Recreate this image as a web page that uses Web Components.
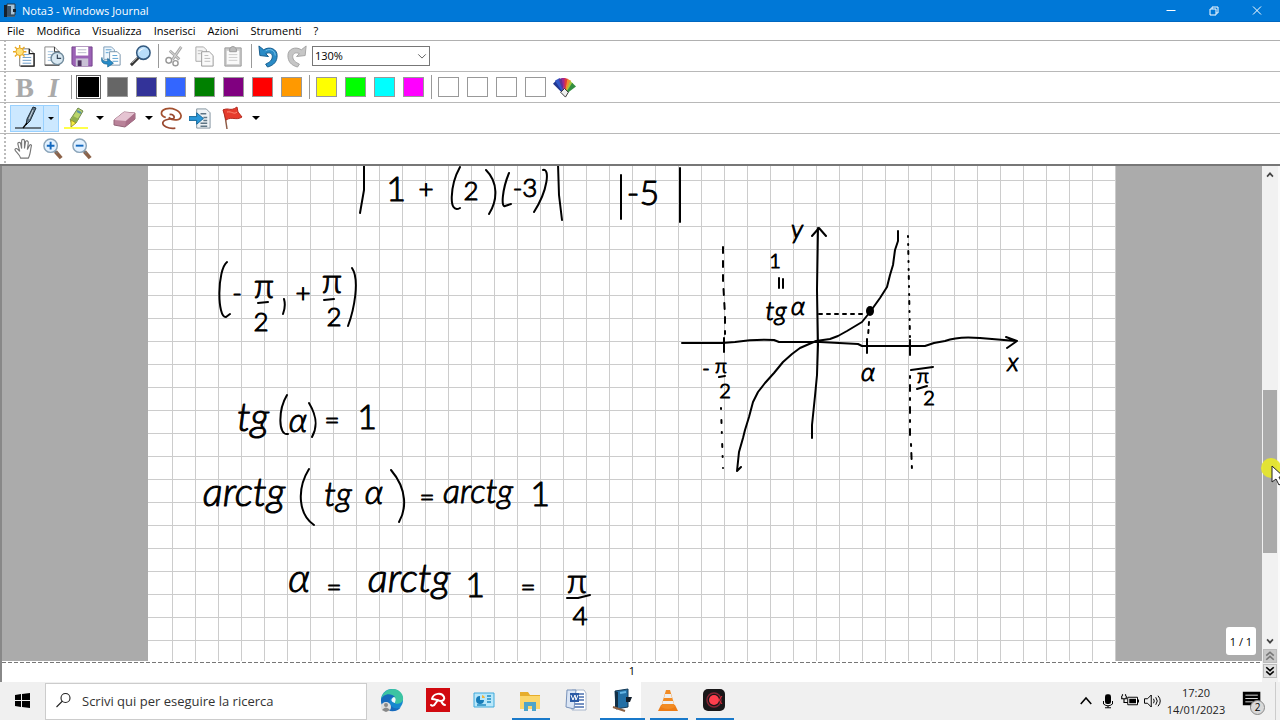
<!DOCTYPE html>
<html lang="it">
<head>
<meta charset="utf-8">
<title>Nota3 - Windows Journal</title>
<style>
  html, body { height: 100%; margin: 0; }
  body { font-family: "Open Sans", "Noto Sans", sans-serif; font-size: 11px; color: #000; background: #fff; overflow: hidden; }
</style>
</head>
<body>
<journal-app></journal-app>

<script>
const ICONS = {
  journal: `<path d="M4 2h9v12H4z" fill="#4b6478"/><path d="M5 1h8v11H5z" fill="#a8c4d8" stroke="#24384a"/><path d="M2 2h3v12H2z" fill="#16212e"/><path d="M5 3h4v9l-4 1z" fill="#3b5268"/><path d="M11 6h3v3h-3z" fill="#18222c"/>`,
  newnote: `<path d="M7 4h10l5 5v13H7z" fill="#fff" stroke="#777"/><path d="M17 4v5h5v13H8" fill="none" stroke="#222" stroke-width="1.4"/><path d="M11 10h6M10 13h9M10 16h9M10 19h9" stroke="#6a9bc8"/><circle cx="7" cy="7" r="4" fill="#ffe27a" stroke="#e5a11a"/><path d="M7 0v3M7 11v3M0 7h3M11 7h3M2 2l2 2M10 10l2 2M12 2l-2 2M2 12l2-2" stroke="#e8a820" stroke-width="1.4"/>`,
  recent: `<path d="M3 2h10l5 5v14H3z" fill="#fff" stroke="#888"/><path d="M13 2v5h5v14H3" fill="none" stroke="#333"/><path d="M6 7h6M6 10h6M6 13h6M6 16h6" stroke="#9fc0dc"/><circle cx="16" cy="14" r="6.500" fill="#d8e8f2" stroke="#718b9c" stroke-width="1.500"/><path d="M16 10v4h4" fill="none" stroke="#345" stroke-width="1.200"/>`,
  save: `<path d="M1 2h21v20H3l-2-2z" fill="#9b62b5" stroke="#73418b"/><path d="M5 2h13v9H5z" fill="#fff"/><path d="M7 5h9M7 8h9" stroke="#b7b7c8"/><path d="M5 14h13v8H5z" fill="#c9c2d6"/><path d="M7 16h4v6H7z" fill="#4e3560"/>`,
  importdoc: `<path d="M4 2h8l3 3v10H4z" fill="#eef6fc" stroke="#7b9db9"/><path d="M10 7h8l3 3v11H10z" fill="#fff" stroke="#7893aa"/><path d="M6 5h6M6 8h3M13 11h5M13 14h6M13 17h6" stroke="#59a0d2"/><path d="M2 13c0 3 2 4 6 4v-3l6 5-6 4v-3c-6 0-7-3-6-7z" fill="#278bc8" stroke="#14608f" stroke-width=".7"/>`,
  find: `<path d="M10 13l-8 8" stroke="#333" stroke-width="3"/><path d="M9 13l-6 6" stroke="#aaa"/><circle cx="15" cy="8" r="7" fill="#b9defa" stroke="#33597f" stroke-width="1.600"/><path d="M10 8c0-3 4-5 7-4-3 0-5 2-7 4z" fill="#fff"/>`,
  cut: `<path d="M18 2L9 15M6 6l10 9" stroke="#aaa" stroke-width="3"/><path d="M18 2L9 15M6 6l10 9" stroke="#ddd"/><circle cx="5" cy="16" r="3" fill="none" stroke="#999" stroke-width="1.500"/><circle cx="12" cy="19" r="2.700" fill="none" stroke="#999" stroke-width="1.500"/>`,
  copy: `<path d="M3 2h8l3 3v12H3z" fill="#f4f4f4" stroke="#aaa"/><path d="M9 7h8l4 4v11H9z" fill="#fafafa" stroke="#999"/><path d="M5 6h5M5 9h3M12 11h4M12 14h6M12 17h6" stroke="#bbb"/>`,
  paste: `<path d="M3 3h17v19H3z" fill="#ccc" stroke="#999"/><path d="M5 6h13v14H5z" fill="#fafafa"/><path d="M8 4q3-5 7 0v3H8z" fill="#bbb" stroke="#999"/><path d="M7 10h9M7 13h9M7 16h9" stroke="#ccc"/>`,
  undo: `<path d="M2 1l1 10 9 1-3-3c4-2 7 0 7 3 0 4-3 6-7 8l2 3c7-2 10-6 10-12 0-7-8-10-14-6z" fill="#2a8bc6" stroke="#155b8c"/><path d="M9 6c5-3 10 0 10 5" stroke="#7cc4ea"/>`,
  redo: `<path d="M21 1l-1 10-9 1 3-3c-4-2-7 0-7 3 0 4 3 6 7 8l-2 3C5 21 2 17 2 11c0-7 8-10 14-6z" fill="#c6c6c6" stroke="#a4a4a4"/>`,
  pen: `<path d="M0 22h26" stroke="#000"/><path d="M18 1l3 1-6 13-4 4 1-6z" fill="#5c7284" stroke="#1f2c36"/><path d="M18 4l-4 9" stroke="#ced8de"/><path d="M12 17l-4 5" fill="none" stroke="#000" stroke-width="1.300"/>`,
  marker: `<path d="M0 22h24" stroke="#ffff4a" stroke-width="2"/><path d="M14 2l5 3-7 12-6-3z" fill="#b9d56b" stroke="#6f8751"/><path d="M9 10l6 3-4 5-5-2z" fill="#8fae4e"/><path d="M7 14l5 3-5 4z" fill="#f4ed3f" stroke="#9d982b"/><path d="M13 5l4 2" stroke="#5a93a5" stroke-width="2"/>`,
  eraser: `<path d="M1 14L11 6l11 1v6l-10 8-11-2z" fill="#b98299" stroke="#946478"/><path d="M1 14L11 6l11 1-9 8z" fill="#e5c4d2"/><path d="M13 15l9-8v6l-10 8z" fill="#a96f89"/>`,
  lasso: `<path d="M6 11C0 9 0 4 6 2c7-2 15 2 16 7 0 5-8 6-13 2" fill="none" stroke="#a3502f" stroke-width="1.800"/><path d="M10 8c4-1 6 3 4 4-4 1-9 0-11 4-1 4 6 7 13 6" fill="none" stroke="#9a4930" stroke-width="1.800"/>`,
  insert: `<path d="M8 2h10l4 4v16H8z" fill="#eef2f5" stroke="#8494a0"/><path d="M12 7h6M12 17h7M12 20h7M15 11h4M15 14h4" stroke="#5e7585" stroke-width="1.500"/><path d="M0 10h8V6l7 6-7 6v-4H0z" fill="#2b98da" stroke="#166799"/>`,
  flag: `<path d="M4 3l3 20" stroke="#8e5b45" stroke-width="1.500"/><path d="M3 4c6-3 7 2 14-3l1 5 4 5c-6 4-10-1-16 3z" fill="#e63b2c" stroke="#b42b20"/><path d="M7 6c5-1 7 3 10 0" fill="none" stroke="#ff8b76"/>`,
  hand: `<path d="M8 21c-1-4-6-7-6-9 1-2 3-1 5 2L5 6c0-2 3-2 3 0l1 5V3c0-2 3-2 3 0v8l1-7c1-2 3-1 3 1l-1 7 2-4c1-2 3-1 2 1-1 5-1 9-3 12z" fill="#fff" stroke="#777" stroke-width="1.200"/>`,
  zoomin: `<path d="M14 14l6 7" stroke="#8c6248" stroke-width="4"/><path d="M13 13l3 3" stroke="#777" stroke-width="2"/><circle cx="9" cy="8" r="7" fill="#e2f1ff" stroke="#8ba5ba" stroke-width="1.500"/><path d="M5 8h8M9 4v8" stroke="#1268bf" stroke-width="2"/>`,
  zoomout: `<path d="M14 14l6 7" stroke="#8c6248" stroke-width="4"/><path d="M13 13l3 3" stroke="#777" stroke-width="2"/><circle cx="9" cy="8" r="7" fill="#e2f1ff" stroke="#8ba5ba" stroke-width="1.500"/><path d="M5 8h8" stroke="#1268bf" stroke-width="2"/>`,
  palette: `<path d="M12 20L0 8 4 4z" fill="#22378f"/><path d="M12 20L2 5l5-3z" fill="#3157c6"/><path d="M12 20L6 3l4-1z" fill="#5f3096"/><path d="M12 20L9 2h4z" fill="#a02890"/><path d="M12 20V2l4 1z" fill="#e03a3a"/><path d="M12 20l3-17 4 2z" fill="#ef9131"/><path d="M12 20l6-15 3 3z" fill="#a5c83b"/><path d="M12 20l8-13 4 4z" fill="#338f40"/><path d="M8 17l4-4 4 4-3 5z" fill="#eee" stroke="#333"/>`,
  start: `<path d="M4 6l6-1v6H4zM11 5l8-1v7h-8zM4 12h6v6l-6-1zM11 12h8v7l-8-1z" fill="#000"/>`,
  search: `<circle cx="14" cy="8" r="6" fill="none" stroke="#222" stroke-width="1.500"/><path d="M10 12l-8 8" stroke="#222" stroke-width="1.500"/>`,
  edge: `<circle cx="12" cy="12" r="11" fill="#1688cf"/><path d="M1 12C2 4 8 1 13 1c7 0 11 6 10 11-1 4-8 5-9 2 2-3-1-6-5-6-4 0-7 1-8 4z" fill="#3cc4a2"/><path d="M1 12c1-6 10-8 14-3-6-1-8 8-1 11 3 1 6 0 7-1-4 6-13 5-17 1-2-2-3-5-3-8z" fill="#166abd"/><path d="M14 9c3 2 1 4 1 6-4-1-5-4-1-6z" fill="#eff9fc"/><circle cx="6" cy="19" r="5" fill="#ddd"/><circle cx="6" cy="17" r="2" fill="#888"/><path d="M2 22q4-5 8 0l-4 2z" fill="#888"/>`,
  umbrella: `<path d="M0 0h24v24H0z" fill="#d10a10"/><path d="M6 11c1-6 10-7 12-2 1 2-1 4-3 4-3 0-5-2-9-2M12 12l-3 4c-1 2-3 2-4 1M15 13c1 2 2 4 4 4" fill="none" stroke="#fff" stroke-width="2" stroke-linecap="round"/>`,
  panel: `<path d="M2 5h20v14H2z" fill="#b8e7fa" stroke="#3fa9db"/><path d="M8 8v4h4a4 4 0 1 1-4-4z" fill="#167cb9"/><path d="M10 7a4 4 0 0 1 3 3h-3z" fill="#f2b23e"/><path d="M15 8h4M15 11h4M15 14h4M5 17h9" stroke="#218ac0" stroke-width="1.500"/>`,
  folder: `<path d="M2 4h8l2 3h10v14H2z" fill="#e6ad2c"/><path d="M2 8h20v13H2z" fill="#fbd66b"/><path d="M6 14h12v9h-4v-5h-4v5H6z" fill="#4ea4c9"/>`,
  word: `<path d="M8 2h12l2 3v17H8z" fill="#fff" stroke="#a8b6cb"/><path d="M14 6h6M14 9h6M14 12h6M8 16h12M8 19h12" stroke="#496fae" stroke-width="1.500"/><path d="M3 2h9l-2 19-8-2z" fill="#dae5f5" stroke="#7791b9"/><path d="M6 5h9v9H6z" fill="#2b5aa5"/><path d="M7 7l2 5 2-5 1 5 2-5" stroke="#fff" fill="none"/>`,
  book: `<path d="M5 3l13-2v18l-12 2z" fill="#236fa5" stroke="#153b58"/><path d="M5 3l3 1v17l-3-2z" fill="#123047"/><path d="M10 5l6-1" stroke="#65b5e4" stroke-width="2"/><path d="M16 9h6l-2 5h-4z" fill="#121e2b"/><path d="M3 19l12 4" stroke="#8c6043" stroke-width="2"/>`,
  cone: `<path d="M5 17h14l3 6H2z" fill="#ed7c15"/><path d="M10 2h4l5 17q-7 4-14 0z" fill="#f28b23"/><path d="M9 6h6l1 4H8zM7 13h10l1 3H6z" fill="#eee"/>`,
  recorder: `<rect x="1" y="1" width="22" height="22" rx="5" fill="#191719"/><circle cx="12" cy="12" r="5" fill="#ff3e4d"/><circle cx="12" cy="12" r="7" fill="none" stroke="#862534" stroke-width="1.500"/><path d="M20 8l-3 4 3 4" stroke="#e52d3b" fill="none"/>`,
  mic: `<rect x="8" y="3" width="8" height="13" rx="3" fill="#000"/><path d="M6 12v4q6 5 12 0v-4M12 18v3M8 21h8" fill="none" stroke="#000" stroke-width="1.300"/>`,
  battery: `<path d="M9 7h13v10H9z" fill="#fff" stroke="#000" stroke-width="1.300"/><path d="M11 9h9v6h-9zM22 10h2v4h-2z" fill="#000"/><path d="M1 5v4h6V5M2 5V3M6 5V3M4 9v5h5" fill="none" stroke="#000" stroke-width="1.500"/>`,
  speaker: `<path d="M2 9h4l5-5v16l-5-5H2z" fill="none" stroke="#000" stroke-width="1.300"/><path d="M14 9q2 3 0 6M17 7q4 5 0 10M20 5q6 7 0 14" fill="none" stroke="#000" stroke-width="1.300"/>`,
  notes: `<path d="M1 1h21v16h-8l-4 4v-4H1z" fill="#000"/><path d="M4 5h15M4 9h15M4 13h9" stroke="#fff"/>`,
  up: `<path d="M5 16l7-8 7 8" fill="none" stroke="currentColor" stroke-width="2"/>`,
  arrowup: `<path d="M5 16l7-8 7 8" fill="none" stroke="currentColor" stroke-width="4"/>`,
  down: `<path d="M3 8l9 9 9-9" fill="none" stroke="currentColor" stroke-width="2"/>`,
  arrowdown: `<path d="M5 8l7 8 7-8" fill="none" stroke="currentColor" stroke-width="4"/>`,
  upup: `<path d="M3 11l9-8 9 8M3 21l9-8 9 8" fill="none" stroke="currentColor" stroke-width="4"/>`,
  downdown: `<path d="M3 3l9 8 9-8M3 13l9 8 9-8" fill="none" stroke="currentColor" stroke-width="4"/>`,
  minimize: `<path d="M3 11h18" stroke="#fff" stroke-width="2"/>`,
  restore: `<path d="M4 8h12v12H4zM8 8V4h12v12h-4" fill="none" stroke="#fff" stroke-width="2"/>`,
  close: `<path d="M4 3l16 16M20 3L4 19" stroke="#fff" stroke-width="2"/>`
};

function component(tag, css, markup) {
  customElements.define(tag, class extends HTMLElement {
    constructor() {
      super();
      this.attachShadow({ mode: "open" });
    }
    connectedCallback() {
      const body = typeof markup === "function" ? markup(this) : markup;
      this.shadowRoot.innerHTML =
        `<style>*{box-sizing:border-box}button{font:inherit;color:inherit;border:0;padding:0;margin:0;background:none}:host{box-sizing:border-box}${css}</style>${body}`;
    }
  });
}

component("app-icon", `
  :host { display: block; width: 24px; height: 24px; flex: none; }
  svg { display: block; width: 100%; height: 100%; }`,
  el => `<svg viewBox="${el.getAttribute("name") === "journal" ? "0 0 16 16" : "0 0 24 24"}" fill="none" aria-hidden="true">${ICONS[el.getAttribute("name")]}</svg>`);

component("title-bar", `
  :host { display: flex; align-items: center; height: 22px; background: #0078d7; color: #fff; border-bottom: 1px solid #0067c0; padding-left: 2px; }
  .logo { width: 16px; height: 16px; margin-right: 4px; }
  h1 { font-size: 11px; font-weight: 400; line-height: 20px; margin: 0; flex: 1; white-space: nowrap; }
  button { width: 43px; height: 20px; display: grid; place-items: center; }
  button app-icon { width: 12px; height: 12px; }
  nav { display: flex; padding-right: 2px; }`, `
  <app-icon class="logo" name="journal"></app-icon><h1>Nota3 - Windows Journal</h1>
  <nav><button aria-label="Riduci a icona"><app-icon name="minimize"></app-icon></button>
  <button aria-label="Ripristina"><app-icon name="restore"></app-icon></button>
  <button aria-label="Chiudi"><app-icon name="close"></app-icon></button></nav>`);

component("menu-bar", `
  :host { display: flex; gap: 12px; height: 19px; padding-left: 7px; border-bottom: 1px solid #b0b0b0; }
  button { font-size: 11px; line-height: 18px; }`,
  ["File", "Modifica", "Visualizza", "Inserisci", "Azioni", "Strumenti", "?"].map(t => `<button>${t}</button>`).join(""));

component("tool-strip", `
  :host { display: flex; align-items: center; height: 31px; padding-left: 10px; border-bottom: 1px solid #b8b8b8;
    background: radial-gradient(circle, #bbb 1px, transparent 1px) 4px 2px / 2px 4px repeat-y #fff; }
  :host([last]) { border-bottom: 2px solid #777; height: 32px; }`, `<slot></slot>`);

component("tool-divider", `
  :host { width: 6px; height: 24px; display: flex; justify-content: center; }
  i { width: 1px; background: #999; }`, `<i></i>`);

component("tool-button", `
  :host { display: block; }
  button { width: 29px; height: 27px; display: grid; place-items: center; }
  app-icon { width: 23px; height: 23px; }
  b { font: bold 28px/27px "Liberation Serif", serif; color: #aaa; }
  b.it { font-style: italic; }`,
  el => {
    const letter = el.getAttribute("letter");
    const face = letter ? `<b class="${letter === "I" ? "it" : ""}">${letter}</b>` : `<app-icon name="${el.getAttribute("icon")}"></app-icon>`;
    return `<button aria-label="${el.getAttribute("label")}">${face}</button>`;
  });

component("split-button", `
  :host { display: flex; height: 27px; border: 1px solid transparent; width: 49px; }
  :host([active]) { background: #cce8ff; border-color: #99d1ff; }
  :host([active]) .more { border-left: 1px solid #99d1ff; }
  .main { flex: 1; display: grid; place-items: center; }
  .more { width: 15px; display: grid; place-items: center; }
  i { border: 4px solid transparent; border-top-color: #000; border-bottom: 0; }
  :host([active]) i { border-width: 3px; border-bottom: 0; }
  app-icon { width: 24px; height: 24px; }
  :host([active]) app-icon { width: 28px; height: 24px; }`,
  el => `<button class="main" aria-label="${el.getAttribute("label")}"><app-icon name="${el.getAttribute("icon")}"></app-icon></button><button class="more" aria-label="Altre opzioni"><i></i></button>`);

component("color-swatch", `
  :host { display: grid; place-items: center; width: 29px; height: 27px; }
  button { width: 21px; height: 20px; border: 1px solid #999; }
  :host([active]) button { outline: 1px solid #666; outline-offset: 1px; border-color: #000; }`,
  el => `<button style="background:${el.getAttribute("color")}" aria-label="Colore ${el.getAttribute("color")}"></button>`);

component("zoom-select", `
  :host { display: flex; position: relative; width: 118px; height: 20px; align-items: center; }
  select { appearance: none; width: 100%; height: 20px; border: 1px solid #777; border-radius: 0; background: #fff; font: 11px/18px "Open Sans", sans-serif; padding: 0 2px; color: #000; }
  app-icon { position: absolute; right: 3px; width: 10px; height: 10px; color: #444; pointer-events: none; }`,
  `<select aria-label="Zoom"><option>130%</option></select><app-icon name="down"></app-icon>`);

component("ink-page", `
  :host { display: block; width: 968px; height: 100%; overflow: hidden;
    background:
      repeating-linear-gradient(to bottom, #ccc 0 1px, transparent 1px 23px) 0 14px / 100% 1150px,
      linear-gradient(#fff, #fff) 0 0 / 4px 100% no-repeat,
      repeating-linear-gradient(to right, #ccc 0 1px, transparent 1px 23px) 1px 0 / 1150px 100%,
      #fff; }
  svg { display: block; width: 968px; height: 495px; }
  .ink { fill: none; stroke: #000; stroke-width: 2; stroke-linecap: round; stroke-linejoin: round; }
  text { font-family: Lato, "Open Sans", sans-serif; font-weight: 300; font-size: 34px; font-style: italic; text-anchor: middle; fill: #000; stroke: #000; stroke-width: 1px; stroke-linejoin: round; }
  .n { font-style: normal; }
  .l { font-size: 40px; }
  .m { font-size: 26px; }
  .s { font-size: 20px; }`, `
  <svg viewBox="148 166 968 495" role="img" aria-label="Appunti sulla funzione tangente">
    <text class="n" x="396" y="201">1</text><text class="n m" x="426" y="198">+</text>
    <text class="n m" x="471" y="200">2</text><text class="n m" x="525" y="197">-3</text><text class="n" x="643" y="205">-5</text>
    <text class="n m" x="237" y="302">-</text><text class="n" x="264" y="298">π</text><text class="n m" x="261" y="331">2</text>
    <text class="n m" x="303" y="302">+</text><text class="n" x="332" y="293">π</text><text class="n m" x="334" y="326">2</text>
    <text class="l" x="253" y="431">tg</text><text x="298" y="432">α</text><text class="n m" x="332" y="429">=</text><text class="n" x="367" y="429">1</text>
    <text class="l" x="244" y="506">arctg</text><text x="338" y="506">tg</text><text x="374" y="504">α</text><text class="n m" x="427" y="506">=</text><text x="478" y="503">arctg</text><text class="n" x="540" y="506">1</text>
    <text class="l" x="299" y="592">α</text><text class="n m" x="334" y="596">=</text><text class="l" x="409" y="592">arctg</text><text class="n" x="475" y="597">1</text><text class="n m" x="528" y="596">=</text><text class="n" x="577" y="593">π</text><text class="n m" x="580" y="625">4</text>
    <text class="m" x="797" y="238">y</text><text class="n s" x="775" y="268">1</text><text class="m" x="776" y="320">tg</text><text class="m" x="798" y="315">α</text>
    <text class="m" x="1013" y="371">x</text><text class="m" x="868" y="381">α</text>
    <text class="n s" x="706" y="375">-</text><text class="n s" x="721" y="373">π</text><text class="n s" x="725" y="398">2</text>
    <text class="n s" x="923" y="383">π</text><text class="n s" x="929" y="405">2</text>
    <g class="ink">
      <path d="M364 164L364 190 360 213M460 167C450 185 448 215 460 208M486 170C498 182 498 200 489 214M509 173C502 190 501 208 505 206L511 204M543 170C550 168 548 190 534 212M558 164L559 195 562 220M621 175V219M680 168V222"/>
      <path d="M227 262C217 270 217 318 226 317L230 314M284 299Q286 306 283 314M352 268C360 280 354 310 348 326M258 303L268 302M324 300L334 299"/>
      <path d="M287 395C278 410 278 436 288 434M309 403C318 418 317 428 312 437M309 469C296 490 299 515 314 525M391 470C408 490 406 510 399 522"/>
      <path d="M567 598L578 598 590 595"/>
      <path d="M682 343L722 343 735 342Q755 339 774 340L779 342 820 342 858 344 862 346 925 346 934 343 945 341Q958 336 980 338L1016 341M1006 337L1017 341 1007 348M818 228L817 290 818 345 817 375 815 396 812 425 812 438M812 236L819 228 826 236"/>
      <path d="M741 467L737 471 739 452 743 438 745 430 749 417 753 402 758 392 765 383 774 373 783 362 792 354 800 348 816 341 830 339 838 336 847 331 862 322 870 312 880 298 887 287 890 275 893 265 895 250 898 241 898 231"/>
      <path d="M724 338V352M867 339V353M910 340V355M779 278V288M783 279V288M719 377L725 376M911 370L933 367M917 389L927 386"/>
      <path d="M723 247L723 280 725 315 725 334" stroke-dasharray="6 8"/>
      <path d="M721 408L723 468" stroke-dasharray="1 11 3 9"/>
      <path d="M908 236L910 338" stroke-dasharray="1 7 1 6 3 7"/>
      <path d="M910 376L910 440M911 444L912 470" stroke-dasharray="2 7 6 7"/>
      <path d="M819 314H864M869 322L868 337" stroke-dasharray="3 5"/>
    </g>
    <ellipse cx="870" cy="311" rx="4" ry="5"/>
  </svg>`);

component("journal-scroll", `
  :host { display: flex; flex-direction: column; width: 18px; flex: none; background: #f1f1f1; border-right: 2px solid #fafafa; align-items: center; }
  .step { width: 16px; height: 17px; display: grid; place-items: center; color: #444; }
  app-icon { width: 10px; height: 10px; }
  .track { flex: 1; width: 14px; display: grid; grid-template-rows: 207fr 163fr 79fr; }
  .thumb { grid-row: 2; background: #aaa; }
  .page { width: 14px; height: 14px; margin-bottom: 1px; background: #e0e0e0; border: 1px solid #bbb; display: grid; place-items: center; }
  .page.off { background: #c8c8c8; color: #777; }
  .bottom { height: 3px; }`, `
  <button class="step" aria-label="Su"><app-icon name="arrowup"></app-icon></button>
  <div class="track"><div class="thumb"></div></div>
  <button class="step" aria-label="Giù"><app-icon name="arrowdown"></app-icon></button>
  <button class="page off" aria-label="Pagina precedente"><app-icon name="upup"></app-icon></button>
  <button class="page" aria-label="Pagina successiva"><app-icon name="downdown"></app-icon></button>
  <div class="bottom"></div>`);

component("mouse-pointer", `
  :host { display: block; position: absolute; right: 0; top: 458px; width: 19px; height: 28px; overflow: hidden; pointer-events: none; }
  svg { display: block; }`,
  `<svg width="19" height="28" aria-hidden="true"><circle cx="10" cy="10" r="10" fill="#e6e62e" opacity=".95"/><path d="M11 8v16l4-3 3 6 3-2-3-6h5z" fill="#fff" stroke="#222"/></svg>`);

component("note-view", `
  :host { display: flex; flex: 1; min-height: 0; border-left: 2px solid #888; }
  .doc { flex: 1; min-width: 0; display: flex; flex-direction: column; position: relative; }
  .desk { flex: 1; min-height: 0; display: flex; justify-content: center; background: #ababab; overflow: hidden; }
  .foot { height: 21px; flex: none; background: repeating-linear-gradient(to right, #777 0 4px, transparent 4px 6px) 0 1px / 100% 1px no-repeat #fff; text-align: center; font-size: 11px; line-height: 20px; }
  .count { position: absolute; right: 6px; bottom: 27px; width: 30px; height: 28px; border-radius: 3px; background: #fff; display: grid; place-items: center; font-size: 11px; white-space: nowrap; }`, `
  <div class="doc"><div class="desk"><ink-page></ink-page></div><div class="foot">1</div><div class="count">1 / 1</div></div>
  <journal-scroll></journal-scroll>`);

component("task-app", `
  :host { display: grid; place-items: center; width: 46px; height: 38px; border-bottom: 2px solid transparent; position: relative; }
  button { display: grid; place-items: center; }
  :host([active]) { background: linear-gradient(#fff, #fff) 1px 0 / 41px 100% no-repeat; }
  i { position: absolute; left: 5px; right: 3px; bottom: -2px; height: 2px; background: #1979ca; }
  :host(:not([running])) i { display: none; }
  :host([active]) i { left: 1px; right: 0; }`,
  el => `<button aria-label="${el.getAttribute("label")}"><app-icon name="${el.getAttribute("icon")}"></app-icon></button><i></i>`);

component("task-bar", `
  :host { display: flex; height: 38px; background: #f0f0f0; align-items: center; }
  .start { width: 45px; height: 38px; display: grid; place-items: center; }
  label { display: flex; align-items: center; width: 322px; height: 37px; background: #fff; border: 1px solid #ccc; padding-left: 9px; gap: 9px; }
  label app-icon { width: 18px; height: 18px; }
  input { border: 0; outline: 0; flex: 1; min-width: 0; padding: 0; font: 13px/20px "Open Sans", sans-serif; background: none; }
  input::placeholder { color: #333; opacity: 1; }
  .apps { display: flex; padding-left: 2px; flex: 1; }
  .tray { display: flex; align-items: center; }
  .tray button { width: 22px; height: 38px; display: grid; place-items: center; }
  .tray app-icon { width: 18px; height: 18px; }
  time { width: 66px; text-align: center; font-size: 11px; line-height: 17px; color: #222; white-space: nowrap; }
  .tray .notes { width: 46px; position: relative; }
  .tray .notes app-icon { width: 20px; height: 20px; }
  .badge { position: absolute; left: 21px; top: 18px; width: 15px; height: 15px; border-radius: 50%; background: #d8d8d8; border: 1px solid #888; font-size: 10px; line-height: 13px; text-align: center; }
  .peek { width: 5px; height: 38px; border-left: 1px solid #ccc; }`, `
  <button class="start" aria-label="Start"><app-icon name="start"></app-icon></button>
  <label><app-icon name="search"></app-icon><input aria-label="Cerca" placeholder="Scrivi qui per eseguire la ricerca"></label>
  <div class="apps">
    <task-app icon="edge" label="Microsoft Edge"></task-app><task-app icon="umbrella" label="Avira"></task-app>
    <task-app icon="panel" label="Pannello di controllo"></task-app><task-app icon="folder" label="Esplora file" running></task-app>
    <task-app icon="word" label="Word"></task-app><task-app icon="book" label="Windows Journal" running active></task-app>
    <task-app icon="cone" label="VLC" running></task-app><task-app icon="recorder" label="Registratore" running></task-app>
  </div>
  <div class="tray">
    <button aria-label="Icone nascoste"><app-icon name="up"></app-icon></button>
    <button aria-label="Microfono"><app-icon name="mic"></app-icon></button>
    <button aria-label="Batteria"><app-icon name="battery"></app-icon></button>
    <button aria-label="Volume"><app-icon name="speaker"></app-icon></button>
    <time datetime="2023-01-14T17:20">17:20<br>14/01/2023</time>
    <button class="notes" aria-label="Notifiche"><app-icon name="notes"></app-icon><span class="badge">2</span></button>
    <div class="peek"></div>
  </div>`);

const tool = (icon, label) => `<tool-button icon="${icon}" label="${label}"></tool-button>`;
const swatch = c => `<color-swatch color="${c}"${c === "#000000" ? " active" : ""}></color-swatch>`;
component("journal-app", `
  :host { display: flex; flex-direction: column; height: 100vh; position: relative; overflow: hidden; }
  title-bar, menu-bar, tool-strip, task-bar { flex: none; }`, `
  <title-bar></title-bar>
  <menu-bar></menu-bar>
  <tool-strip>
    ${tool("newnote", "Nuova nota")}${tool("recent", "Nota da modello")}${tool("save", "Salva")}${tool("importdoc", "Importa")}${tool("find", "Trova")}
    <tool-divider></tool-divider>
    ${tool("cut", "Taglia")}${tool("copy", "Copia")}${tool("paste", "Incolla")}
    <tool-divider></tool-divider>
    ${tool("undo", "Annulla")}${tool("redo", "Ripeti")}
    <zoom-select></zoom-select>
  </tool-strip>
  <tool-strip>
    <tool-button letter="B" label="Grassetto"></tool-button><tool-button letter="I" label="Corsivo"></tool-button>
    <tool-divider></tool-divider>
    ${["#000000", "#666666", "#333399", "#3366ff", "#008000", "#800080", "#ff0000", "#ff9900"].map(swatch).join("")}
    <tool-divider></tool-divider>
    ${["#ffff00", "#00ff00", "#00ffff", "#ff00ff"].map(swatch).join("")}
    <tool-divider></tool-divider>
    ${["#fff", "#fff", "#fff", "#fff"].map(swatch).join("")}
    ${tool("palette", "Altri colori")}
  </tool-strip>
  <tool-strip>
    <split-button icon="pen" label="Penna" active></split-button>
    <split-button icon="marker" label="Evidenziatore"></split-button>
    <split-button icon="eraser" label="Gomma"></split-button>
    ${tool("lasso", "Selezione")}${tool("insert", "Inserisci spazio")}
    <split-button icon="flag" label="Contrassegno"></split-button>
  </tool-strip>
  <tool-strip last>${tool("hand", "Panoramica")}${tool("zoomin", "Zoom avanti")}${tool("zoomout", "Zoom indietro")}</tool-strip>
  <note-view></note-view>
  <task-bar></task-bar>
  <mouse-pointer></mouse-pointer>`);
</script>
</body>
</html>
